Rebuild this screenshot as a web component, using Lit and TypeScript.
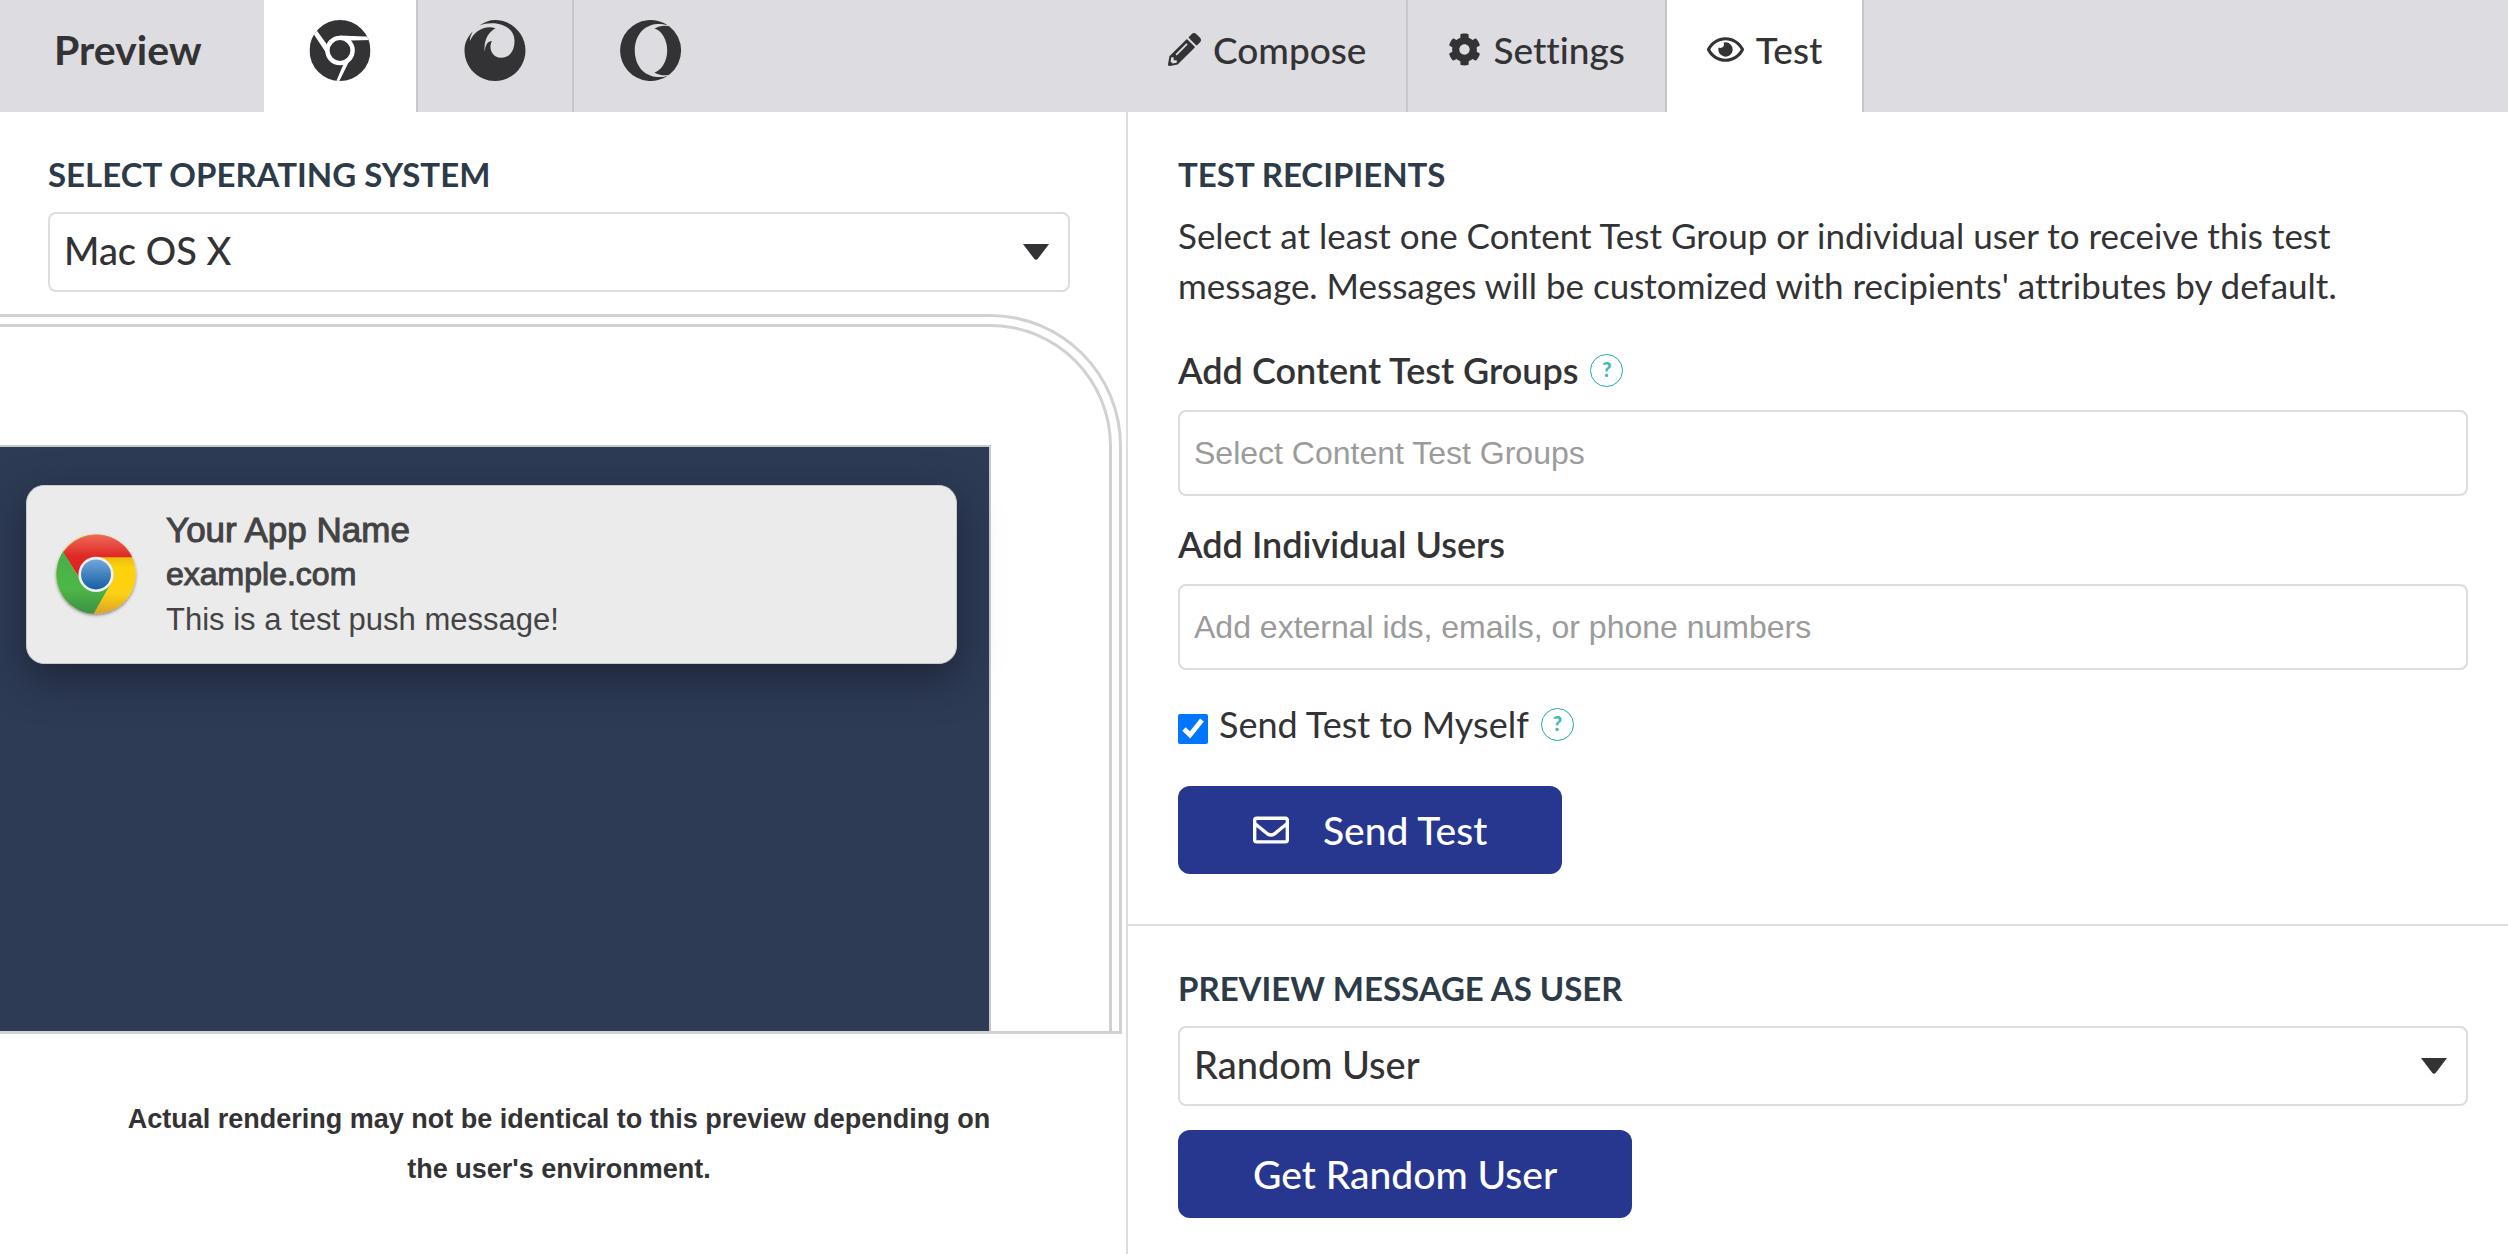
import { LitElement, html, css, svg } from "lit";
import { customElement, property, state } from "lit/decorators.js";
import { classMap } from "lit/directives/class-map.js";

const pencilIcon = svg`<path d="M497.9 142.1l-46.1 46.1c-4.7 4.7-12.3 4.7-17 0l-111-111c-4.7-4.7-4.7-12.3 0-17l46.1-46.1c18.7-18.7 49.1-18.7 67.9 0l60.1 60.1c18.8 18.7 18.8 49.1 0 67.9zM284.2 99.8L21.6 362.4.4 483.9c-2.9 16.4 11.4 30.6 27.8 27.8l121.5-21.3 262.6-262.6c4.7-4.7 4.7-12.3 0-17l-111-111c-4.8-4.7-12.4-4.7-17.1 0zM124.1 339.9c-5.5-5.5-5.5-14.3 0-19.8l154-154c5.5-5.5 14.3-5.5 19.8 0s5.5 14.3 0 19.8l-154 154c-5.5 5.5-14.3 5.5-19.8 0zM88 424h48v36.3l-64.5 11.3-31.1-31.1L51.7 376H88v48z"/>`;
const cogIcon = svg`<path d="M487.4 315.7l-42.6-24.6c4.3-23.2 4.3-47 0-70.2l42.6-24.6c4.9-2.8 7.1-8.6 5.5-14-11.1-35.6-30-67.8-54.7-94.6-3.8-4.1-10-5.1-14.8-2.3L380.8 110c-17.9-15.4-38.5-27.3-60.8-35.1V25.8c0-5.6-3.9-10.5-9.4-11.7-36.7-8.2-74.3-7.8-109.2 0-5.5 1.2-9.4 6.1-9.4 11.7V75c-22.2 7.9-42.8 19.8-60.8 35.1L88.7 85.5c-4.9-2.8-11-1.9-14.8 2.3-24.7 26.7-43.6 58.9-54.7 94.6-1.7 5.4.6 11.2 5.5 14L67.3 221c-4.3 23.2-4.3 47 0 70.2l-42.6 24.6c-4.9 2.8-7.1 8.6-5.5 14 11.1 35.6 30 67.8 54.7 94.6 3.8 4.1 10 5.1 14.8 2.3l42.6-24.6c17.9 15.4 38.5 27.3 60.8 35.1v49.2c0 5.6 3.9 10.5 9.4 11.7 36.7 8.2 74.3 7.8 109.2 0 5.5-1.2 9.4-6.1 9.4-11.7v-49.2c22.2-7.9 42.8-19.8 60.8-35.1l42.6 24.6c4.9 2.8 11 1.9 14.8-2.3 24.7-26.7 43.6-58.9 54.7-94.6 1.5-5.5-.7-11.3-5.6-14.1zM256 336c-44.1 0-80-35.9-80-80s35.9-80 80-80 80 35.9 80 80-35.9 80-80 80z"/>`;
const eyeIcon = svg`<path d="M288 144a110.94 110.94 0 0 0-31.24 5 55.4 55.4 0 0 1 7.24 27 56 56 0 0 1-56 56 55.4 55.4 0 0 1-27-7.24A111.71 111.71 0 1 0 288 144zm284.52 97.4C518.29 135.59 410.93 64 288 64S57.68 135.64 3.48 241.41a32.35 32.35 0 0 0 0 29.19C57.71 376.41 165.07 448 288 448s230.32-71.64 284.52-177.41a32.35 32.35 0 0 0 0-29.19zM288 400c-98.65 0-189.09-55-237.93-144C98.91 167 189.34 112 288 112s189.09 55 237.93 144C477.1 345 386.66 400 288 400z"/>`;
const envelopeIcon = svg`<path d="M464 64H48C21.49 64 0 85.49 0 112v288c0 26.51 21.49 48 48 48h416c26.51 0 48-21.49 48-48V112c0-26.51-21.49-48-48-48zm0 48v40.805c-22.422 18.259-58.168 46.651-134.587 106.49-16.841 13.247-50.201 45.072-73.413 44.701-23.208.375-56.579-31.459-73.413-44.701C106.18 199.465 70.425 171.067 48 152.805V112h416zM48 400V214.398c22.914 18.251 55.409 43.862 104.938 82.646 21.857 17.205 60.134 55.186 103.062 54.955 42.717.231 80.509-37.199 103.053-54.947 49.528-38.783 82.032-64.401 104.947-82.653V400H48z"/>`;

const chromeGlyph = svg`
  <defs><clipPath id="disc"><circle cx="30.5" cy="30.5" r="30.5"/></clipPath></defs>
  <g clip-path="url(#disc)">
    <rect width="61" height="61"/>
    <circle cx="30.5" cy="30.5" r="12.6" fill="none" stroke="#fff" stroke-width="4.4"/>
    <path d="M30 15.6L62 16.8V20L41 20.6z M17.4 34L3.6 13.2L6.6 9.6L17.8 25z M45.2 30L28.4 64H25.6L34 44z" fill="#fff"/>
  </g>`;
const firefoxGlyph = svg`<path d="M15 5.5C20 2 25 0 30.5 0C47.3 0 61 13.7 61 30.5S47.3 61 30.5 61S0 47.3 0 30.5C0 23 3 17 8.2 11.6C6.2 16 5.2 18 5.4 21C10 11 20 5 31 8.2C24 12 19 20 20.2 31.5C21 25 23 21 27.6 21C23.6 27 27 37.7 36.5 37.7C46 37.7 50 30 50 21C50 10 40 3 27 3.2C22 3.2 19 4 15 5.5Z"/>`;
const operaGlyph = svg`
  <path d="M47.7 5.6A30.5 30.5 0 1 0 47.7 55.4C43.6 57 41 57 37 57C22 56 14.3 44 14.3 30.5S22 5 37 4C41 4 44 4.4 47.7 5.6Z"/>
  <path d="M34 8.6C38 6 43.6 5 48.7 6.3A30.5 30.5 0 0 1 48.7 54.7C43.6 56 38 55 34 52.4C42 50 46.7 40 46.7 30.5S42 11 34 8.6Z"/>`;

/** Drop-down with a flat caret laid over the native control. */
@customElement("select-box")
export class SelectBox extends LitElement {
  @property() label = "";
  @property({ type: Array }) options: string[] = [];

  static styles = css`
    :host { display: block; }
    .label {
      display: block;
      margin-bottom: 18px;
      font-size: 33px;
      line-height: 40px;
      font-weight: 700;
      color: #2c3b47;
      text-transform: uppercase;
    }
    .field { display: grid; align-items: center; }
    .control, .caret { grid-area: 1 / 1; }
    .control {
      appearance: none;
      box-sizing: border-box;
      width: 100%;
      height: 80px;
      padding: 0 60px 4px 14px;
      border: 2px solid #dcdce1;
      border-radius: 8px;
      background: #fff;
      color: #333335;
      font: inherit;
      font-size: 38px;
      font-weight: 500;
    }
    .caret {
      justify-self: end;
      margin-right: 20px;
      width: 28px;
      height: 16px;
      fill: #333335;
      pointer-events: none;
    }
  `;

  render() {
    return html`
      <label class="label" for="control">${this.label}</label>
      <div class="field">
        <select class="control" id="control">
          ${this.options.map((o) => html`<option>${o}</option>`)}
        </select>
        <svg class="caret" viewBox="0 0 28 16" aria-hidden="true"><path d="M1 0H27L16 14.6Q14 17 12 14.6Z"/></svg>
      </div>`;
  }
}

@customElement("preview-pane")
export class PreviewPane extends LitElement {
  @state() private browser = "chrome";

  static styles = css`
    :host { display: flex; flex-direction: column; min-width: 0; overflow: hidden; }
    .bar { display: flex; height: 112px; background: #dddce1; }
    .title {
      margin: 0;
      padding: 0 62px 14px 54px;
      display: flex;
      align-items: center;
      font-size: 41px;
      font-weight: 700;
      color: #333335;
    }
    .tab {
      display: flex;
      align-items: center;
      padding: 0 45px 12px;
      border: 0;
      border-right: 2px solid #c7c6cb;
      background: none;
      fill: #333335;
    }
    .tab + .tab { padding: 0 46px 12px; }
    .tab:last-child { border-right: 0; }
    .active { background: #fff; }
    .logo { width: 62px; height: 61px; }
    .body { flex: 1; border-right: 2px solid #dcdce1; }
    .picker { padding: 42px 56px 22px 48px; }
    .device {
      margin-right: 4px;
      padding: 7px 7px 0 0;
      border: solid #d1d1d1;
      border-width: 3px 3px 3px 0;
      border-radius: 0 132px 0 0;
    }
    .bezel {
      padding: 118px 118px 0 0;
      border: solid #d1d1d1;
      border-width: 3px 3px 0 0;
      border-radius: 0 122px 0 0;
    }
    .screen {
      min-height: 546px;
      padding: 38px 32px 0 26px;
      border: solid #c6c8cb;
      border-width: 2px 2px 0 0;
      background: #2d3b55;
    }
    .toast {
      display: flex;
      align-items: center;
      gap: 30px;
      padding: 21px 29px;
      border: 1px solid #c9cace;
      border-radius: 18px;
      background: #ebebeb;
      box-shadow: 0 14px 40px rgba(20, 22, 34, 0.6);
      font-family: "Liberation Sans", Arial, sans-serif;
      line-height: 45px;
      color: #434345;
    }
    .toast-icon { width: 80px; height: 81px; flex: none; overflow: visible; }
    .toast p { margin: 0; }
    .app { font-size: 35px; -webkit-text-stroke: 1px #434345; }
    .site { font-size: 32px; -webkit-text-stroke: 1px #434345; }
    .message { font-size: 31px; }
    .note {
      margin: 60px 56px 0 48px;
      padding: 0 60px;
      text-align: center;
      font: 700 27px/50px "Liberation Sans", Arial, sans-serif;
      color: #333335;
    }
  `;

  private tab(id: string, name: string, glyph: unknown) {
    return html`<button
      class=${classMap({ tab: true, active: this.browser === id })}
      aria-label=${name}
      @click=${() => (this.browser = id)}
    ><svg class="logo" viewBox="0 0 61 61" aria-hidden="true">${glyph}</svg></button>`;
  }

  render() {
    return html`
      <header class="bar">
        <h2 class="title">Preview</h2>
        ${this.tab("chrome", "Chrome", chromeGlyph)}
        ${this.tab("firefox", "Firefox", firefoxGlyph)}
        ${this.tab("opera", "Opera", operaGlyph)}
      </header>
      <div class="body">
        <div class="picker">
          <select-box label="Select operating system" .options=${["Mac OS X", "Windows"]}></select-box>
        </div>
        <div class="device"><div class="bezel"><div class="screen">
          <div class="toast">
            <svg class="toast-icon" viewBox="0 0 80 81" aria-hidden="true">
              <defs>
                <linearGradient id="red" x1="0" y1="0" x2="0" y2="1"><stop offset="0" stop-color="#ee6a58"/><stop offset=".5" stop-color="#de2a27"/><stop offset="1" stop-color="#d9201f"/></linearGradient>
                <linearGradient id="green" x1="0" y1="0" x2="0" y2="1"><stop offset="0" stop-color="#45b04a"/><stop offset=".6" stop-color="#4db748"/><stop offset="1" stop-color="#3c9143"/></linearGradient>
                <linearGradient id="yellow" x1="0" y1="0" x2="0" y2="1"><stop offset="0.25" stop-color="#e6b413"/><stop offset=".42" stop-color="#fdd20a"/><stop offset=".75" stop-color="#fcd015"/><stop offset="1" stop-color="#dba32a"/></linearGradient>
                <linearGradient id="blue" x1="0" y1="0" x2="0" y2="1"><stop offset="0" stop-color="#74a5da"/><stop offset="1" stop-color="#135fa5"/></linearGradient>
                <filter id="soft" x="-20%" y="-20%" width="140%" height="140%"><feDropShadow dx="0" dy="1.5" stdDeviation="1.5" flood-color="#000" flood-opacity=".45"/></filter>
              </defs>
              <circle cx="40" cy="40" r="39.8" fill="url(#yellow)" filter="url(#soft)"/>
              <path d="M8.4 19.4L24 46L40 40L55.6 48L37.6 79.8A39.8 39.8 0 0 1 8.4 16z" fill="url(#green)"/>
              <path d="M7.4 18.2A39.8 39.8 0 0 1 76.2 23.2H40V40L23 43.6z" fill="url(#red)"/>
              <circle cx="40" cy="40.4" r="17.6" fill="#f1f1ee"/>
              <circle cx="40" cy="40.4" r="15" fill="url(#blue)"/>
            </svg>
            <div>
              <p class="app">Your App Name</p>
              <p class="site">example.com</p>
              <p class="message">This is a test push message!</p>
            </div>
          </div>
        </div></div></div>
        <p class="note">Actual rendering may not be identical to this preview depending on the user's environment.</p>
      </div>`;
  }
}

@customElement("editor-pane")
export class EditorPane extends LitElement {
  @state() private view = "test";

  static styles = css`
    :host { display: block; min-width: 0; color: #333335; }
    .bar { display: flex; height: 112px; background: #dddce1; }
    .tab {
      display: flex;
      align-items: center;
      gap: 12px;
      padding: 0 40px 14px;
      border: 0;
      border-right: 2px solid #c7c6cb;
      background: none;
      color: inherit;
      fill: currentColor;
      font: inherit;
      font-size: 37px;
      font-weight: 500;
    }
    .active { background: #fff; }
    .icon { width: 33px; height: 33px; }
    .icon.wide { width: 37px; }
    .section { padding: 42px 40px 50px 50px; }
    .section + .section { border-top: 2px solid #dcdce1; padding-bottom: 36px; }
    .heading {
      margin: 0 0 16px;
      font-size: 33px;
      line-height: 40px;
      font-weight: 700;
      color: #2c3b47;
      text-transform: uppercase;
    }
    .intro { margin: 0 0 40px; font-size: 35px; line-height: 50px; }
    .row { display: flex; align-items: center; gap: 12px; margin-bottom: 20px; line-height: 40px; }
    .label { font-size: 36px; font-weight: 600; }
    .help {
      box-sizing: border-box;
      width: 33px;
      height: 33px;
      padding: 0 0 2px;
      border: 1px solid #1fabA8;
      border-radius: 50%;
      background: none;
      color: #3db9b6;
      font: inherit;
      font-size: 20px;
      line-height: 20px;
      font-weight: 900;
    }
    .input {
      box-sizing: border-box;
      display: block;
      width: 100%;
      height: 86px;
      margin-bottom: 28px;
      padding: 0 14px;
      border: 2px solid #dcdce1;
      border-radius: 8px;
      font: 32px "Liberation Sans", Arial, sans-serif;
    }
    .input::placeholder { color: #9b9b9b; opacity: 1; }
    .check { display: flex; align-items: flex-end; gap: 11px; font-size: 36px; }
    .box { width: 30px; height: 30px; margin: 0; accent-color: #0075ff; }
    .myself { padding-top: 6px; margin-bottom: 42px; }
    .button {
      display: flex;
      align-items: center;
      gap: 34px;
      height: 88px;
      padding: 0 75px;
      border: 0;
      border-radius: 12px;
      background: #27368f;
      color: #fff;
      fill: #fff;
      font: inherit;
      font-size: 39px;
      font-weight: 500;
    }
    .button .icon { width: 36px; height: 36px; }
    .spaced { margin-top: 24px; }
  `;

  private tab(id: string, name: string, glyph: unknown, box = "0 0 512 512", wide = false) {
    return html`<button
      class=${classMap({ tab: true, active: this.view === id })}
      @click=${() => (this.view = id)}
    ><svg class=${classMap({ icon: true, wide })} viewBox=${box} aria-hidden="true">${glyph}</svg>${name}</button>`;
  }

  render() {
    return html`
      <nav class="bar">
        ${this.tab("compose", "Compose", pencilIcon)}
        ${this.tab("settings", "Settings", cogIcon)}
        ${this.tab("test", "Test", eyeIcon, "0 0 576 512", true)}
      </nav>
      <section class="section">
        <h3 class="heading">Test recipients</h3>
        <p class="intro">Select at least one Content Test Group or individual user to receive this test message. Messages will be customized with recipients' attributes by default.</p>
        <div class="row">
          <label class="label" for="groups">Add Content Test Groups</label>
          <button class="help" aria-label="About content test groups">?</button>
        </div>
        <input class="input" id="groups" placeholder="Select Content Test Groups" />
        <div class="row"><label class="label" for="users">Add Individual Users</label></div>
        <input class="input" id="users" placeholder="Add external ids, emails, or phone numbers" />
        <div class="row myself">
          <label class="check"><input class="box" type="checkbox" checked />Send Test to Myself</label>
          <button class="help" aria-label="About sending to myself">?</button>
        </div>
        <button class="button"><svg class="icon" viewBox="0 0 512 512" aria-hidden="true">${envelopeIcon}</svg>Send Test</button>
      </section>
      <section class="section">
        <select-box label="Preview message as user" .options=${["Random User", "Select Existing User", "Custom User"]}></select-box>
        <button class="button spaced">Get Random User</button>
      </section>`;
  }
}

@customElement("app-root")
export class AppRoot extends LitElement {
  static styles = css`
    :host {
      display: grid;
      grid-template-columns: 564fr 690fr;
      min-height: 100vh;
      background: #fff;
      font-family: Lato, "Open Sans", sans-serif;
      font-variant-ligatures: none;
    }
  `;

  render() {
    return html`<preview-pane></preview-pane><editor-pane></editor-pane>`;
  }
}
